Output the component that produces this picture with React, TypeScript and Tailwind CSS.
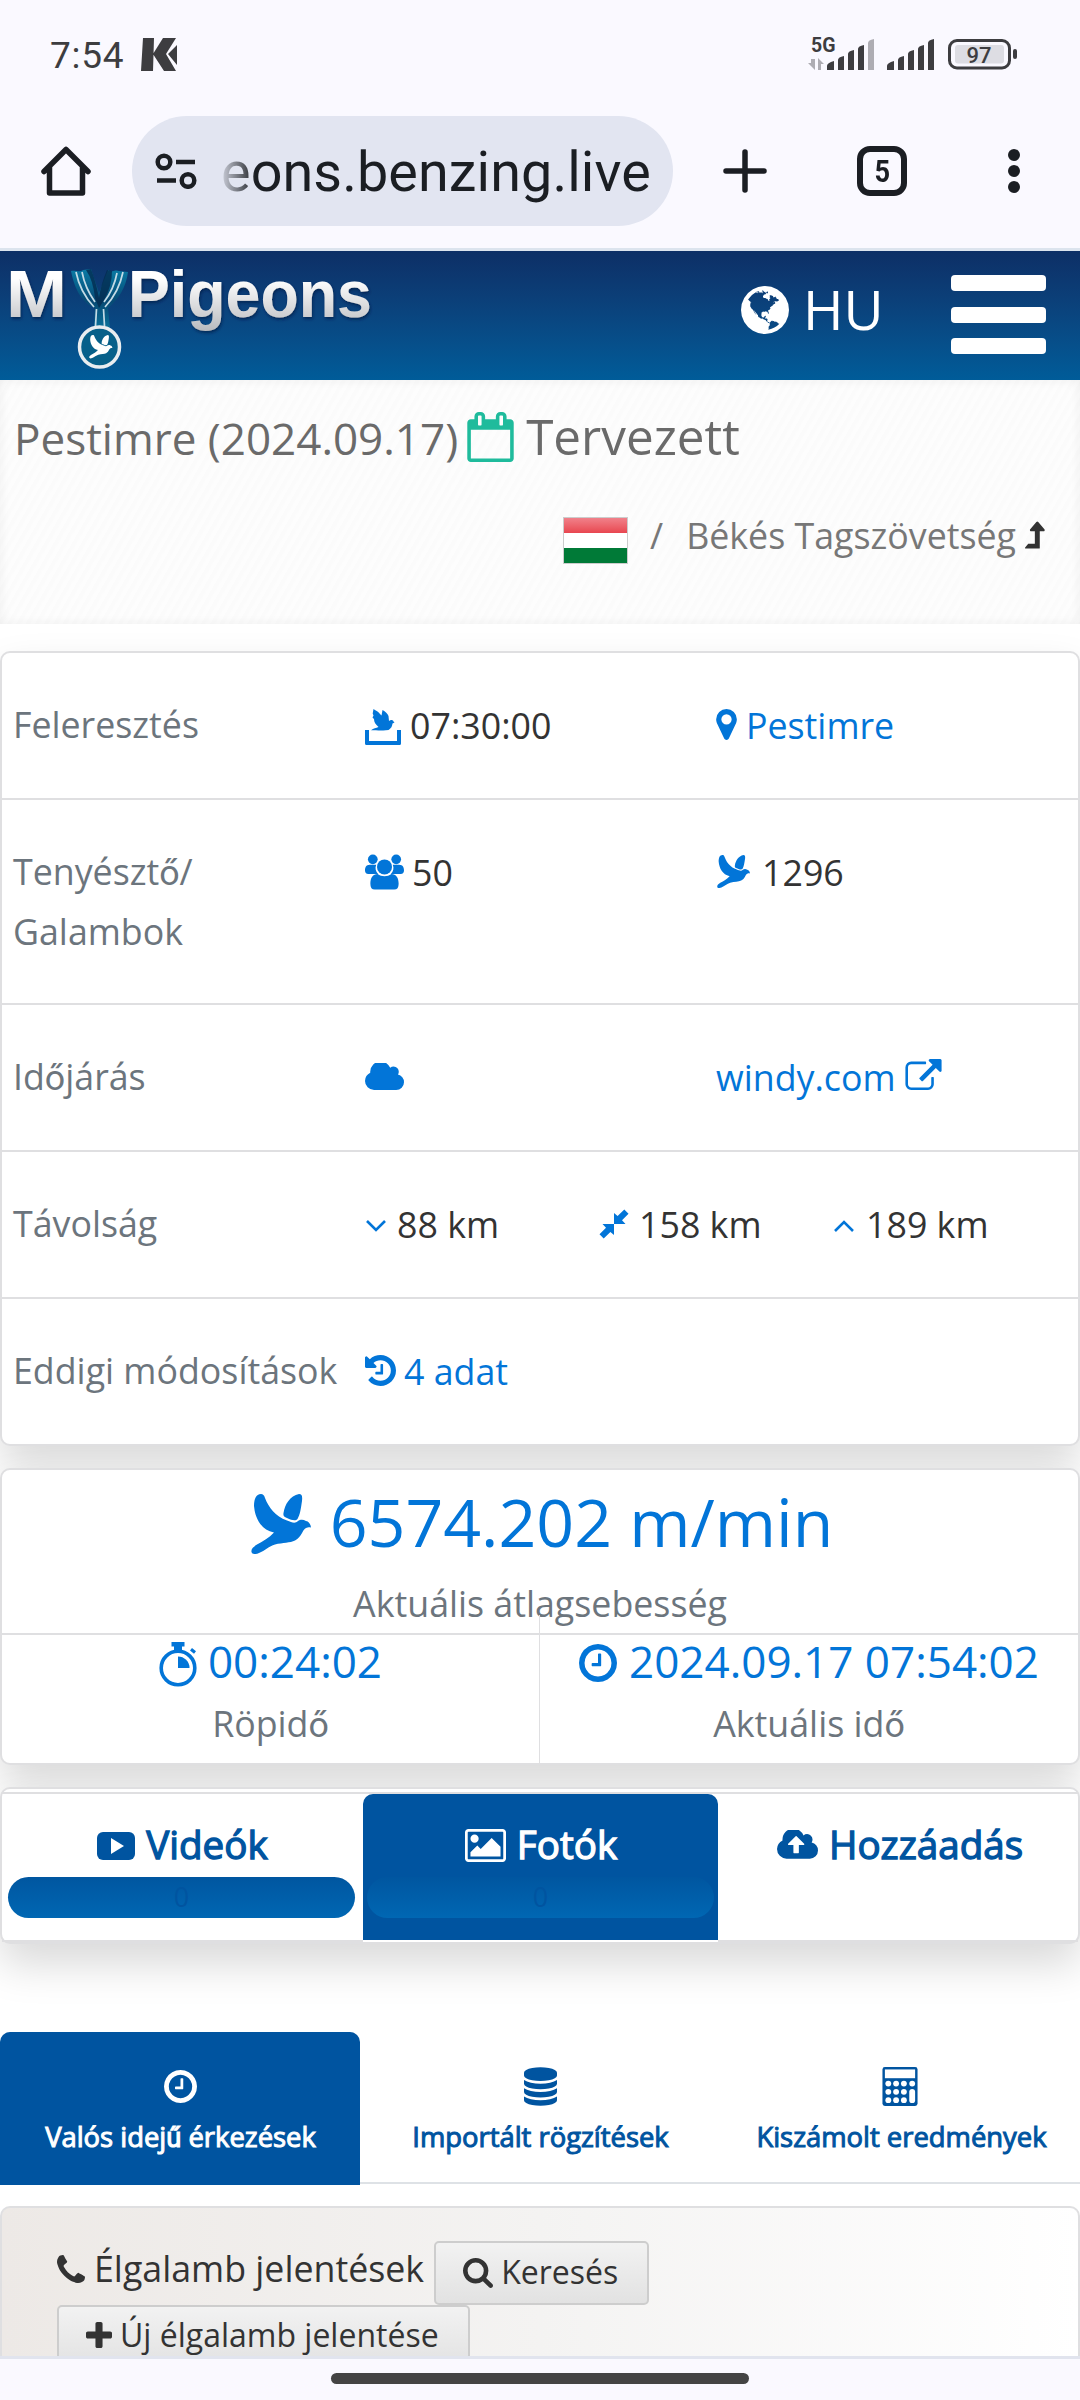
import React from 'react';

interface IconProps {
    className?: string;
}

interface GlyphProps extends IconProps {
    d: string;
    box?: string;
}

const Glyph: React.FC<GlyphProps> = ({ d, box = '0 0 1792 1792', className = '' }) => (
    <svg viewBox={box} fill="currentColor" className={`shrink-0 ${className}`}>
        <path d={d} />
    </svg>
);

const GLOBE =
    'M896 128q209 0 385.5 103t279.5 279.5 103 385.5-103 385.5-279.5 279.5-385.5 103-385.5-103-279.5-279.5-103-385.5 103-385.5 279.5-279.5 385.5-103zm274 521q-2 1-9.5 9.5t-13.5 9.5q2 0 4.5-5t5-11 3.5-7q6-7 22-15 14-6 52-12 34-8 51 11-2-2 9.5-13t14.5-12q3-2 15-4.5t15-7.5l2-22q-12 1-17.5-7t-6.5-21q0 2-6 8 0-7-4.5-8t-11.5 1-9 1q-10-3-15-7.5t-8-16.5-4-15q-2-5-9.5-11t-9.5-10q-1-2-2.5-5.5t-3-6.5-4-5.5-5.5-2.5-7 5-7.5 10-4.5 5q-3-2-6-1.5t-4.5 1-4.5 3-5 3.5q-3 2-8.5 3t-8.5 2q15-5-1-11-10-4-16-3 9-4 7.5-12t-8.5-14h5q-1-4-8.5-8.5t-17.5-8.5-13-6q-8-5-34-9.5t-33-.5q-5 6-4.5 10.5t4 14 3.5 12.5q1 6-5.5 13t-6.5 12q0 7 14 15.5t10 21.5q-3 8-16 16t-16 12q-5 8-1.5 18.5t10.5 16.5q2 2 1.5 4t-3.5 4.5-5.5 4-6.5 3.5l-3 2q-11 5-20.5-6t-13.5-26q-7-25-16-30-23-8-29 1-5-13-41-26-25-9-58-4 6-1 0-15-7-15-19-12 3-6 4-17.5t1-13.5q3-13 12-23 1-1 7-8.5t9.5-13.5.5-6q35 4 50-11 5-5 11.5-17t10.5-17q9-6 14-5.5t14.5 5.5 14.5 5q14 1 15.5-11t-7.5-20q12 1 3-17-4-7-8-9-12-4-27 5-8 4 2 8-1-1-9.5 10.5t-16.5 17.5-16-5q-1-1-5.5-13.5t-9.5-13.5q-8 0-16 15 3-8-11-15t-24-8q19-12-8-27-7-4-20.5-5t-19.5 4q-5 7-5.5 11.5t5 8 10.5 5.5 11.5 4 8.5 3q14 10 8 14-2 1-8.5 3.5t-11.5 4.5-6 4q-3 4 0 14t-2 14q-5-5-9-17.5t-7-16.5q7 9-25 6l-10-1q-4 0-16 2t-20.5 1-13.5-8q-4-8 0-20 1-4 4-2-4-3-11-9.5t-10-8.5q-46 15-94 41 6 1 12-1 5-2 13-6.5t10-5.5q34-14 42-7l5-5q14 16 20 25-7-4-30-1-20 6-22 12 7 12 5 18-4-3-11.5-10t-14.5-11-15-5q-16 0-22 1-146 80-235 222 7 7 12 8 4 1 5 9t2.5 11 11.5-3q9 8 3 19 1-1 44 27 19 17 21 21 3 11-10 18-1-2-9-9t-9-4q-3 5 .5 18.5t10.5 12.5q-7 0-9.5 16t-2.5 35.5-1 23.5l2 1q-3 12 5.5 34.5t21.5 19.5q-13 3 20 43 6 8 8 9 3 2 12 7.5t15 10 10 10.5q4 5 10 22.5t14 23.5q-2 6 9.5 20t10.5 23q-1 0-2.5 1t-2.5 1q3 7 15.5 14t15.5 13q1 3 2 10t3 11 8 2q2-20-24-62-15-25-17-29-3-5-5.5-15.5t-4.5-14.5q2 0 6 1.5t8.500 3.500 7.500 4 2 3q-3 7 2 17.500t12 18.500 17 19 12 13q6 6 14 19.500t0 13.500q9 0 20 10.500t17 19.500q5 8 8 26t5 24q2 7 8.500 13.500t12.500 9.500l16 8 13 7q5 2 18.500 10.500t21.500 11.500q10 4 16 4t14.500-2.500 13.500-3.500q15-2 29 15t21 21q36 19 55 11-2 1 .5 7.500t8 15.500 9 14.500 5.500 8.500q5 6 18 15t18 15q6-4 7-9-3 8 7 20t18 10q14-3 14-32-31 15-49-18 0-1-2.500-5.500t-4-8.500-2.500-8.500 0-7.500 5-3q9 0 10-3.500t-2-12.500-4-13q-1-8-11-20t-12-15q-5 9-16 8t-16-9q0 1-1.500 5.500t-1.500 6.500q-13 0-15-1 1-3 2.500-17.500t3.500-22.500q1-4 5.500-12t7.500-14.500 4-12.500-4.500-9.500-17.500-2.500q-19 1-26 20-1 3-3 10.500t-5 11.500-9 7q-7 3-24 2t-24-5q-13-8-22.500-29t-9.500-37q0-10 2.500-26.500t3-25-5.500-24.500q3-2 9-9.500t10-10.500q2-1 4.500-1.500t4.500 0 4-1.500 3-6q-1-1-4-3-3-3-4-3 7 3 28.500-1.500t27.500 1.500q15 11 22-2 0-1-2.500-9.500t-.5-13.500q5 27 29 9 3 3 15.500 5t17.500 5q3 2 7 5.500t5.500 4.500 5-.5 8.500-6.500q10 14 12 24 11 40 19 44 7 3 11 2t4.500-9.500 0-14-1.500-12.500l-1-8v-18l-1-8q-15-3-18.500-12t1.500-18.500 15-18.500q1-1 8-3.500t15.500-6.500 12.500-8q21-19 15-35 7 0 11-9-1 0-5-3t-7.500-5-4.500-2q9-5 2-16 5-3 7.500-11t7.500-10q9 12 21 2 8-8 1-16 5-7 20.500-10.500t18.500-9.500q7 2 8-2t1-12 3-12q4-5 15-9t13-5l17-11q3-4 0-4 18 2 31-11 10-11-6-20 3-6-3-9.500t-15-5.500q3-1 11.500-.5t10.500-1.500q15-10-7-16-17-5-43 12zm-163 877q206-36 351-189-3-3-12.500-4.500t-12.500-3.500q-18-7-24-8 1-7-2.500-13t-8-9-12.500-8-11-7q-2-2-7-6t-7-5.500-7.500-4.500-8.500-2-10 1l-3 1q-3 1-5.500 2.500t-5.500 3-4 3 0 2.500q-21-17-36-22-5-1-11-5.500t-10.500-7-10-1.500-11.500 7q-5 5-6 15t-2 13q-7-5 0-17.500t2-18.500q-3-6-10.500-4.500t-12 4.500-11.500 8.500-9 6.500-8.500 5.500-8.500 7.500q-3 4-6 12t-5 11q-2-4-11.500-6.500t-9.500-5.500q2 10 4 35t5 38q7 31-12 48-27 25-29 40-4 22 12 26 0 7-8 20.500t-7 21.500q0 6 2 16z';
const CLOCK =
    'M1024 544v448q0 14-9 23t-23 9h-320q-14 0-23-9t-9-23v-64q0-14 9-23t23-9h224v-352q0-14 9-23t23-9h64q14 0 23 9t9 23zm416 352q0-148-73-273t-198-198-273-73-273 73-198 198-73 273 73 273 198 198 273 73 273-73 198-198 73-273zm224 0q0 209-103 385.5t-279.5 279.5-385.5 103-385.5-103-279.5-279.5-103-385.5 103-385.5 279.5-279.5 385.5-103 385.5 103 279.5 279.5 103 385.5z';
const CALENDAR =
    'M192 1664h1408v-1024h-1408v1024zm384-1216v-288q0-14-9-23t-23-9h-64q-14 0-23 9t-9 23v288q0 14 9 23t23 9h64q14 0 23-9t9-23zm768 0v-288q0-14-9-23t-23-9h-64q-14 0-23 9t-9 23v288q0 14 9 23t23 9h64q14 0 23-9t9-23zm384-64v1280q0 52-38 90t-90 38h-1408q-52 0-90-38t-38-90v-1280q0-52 38-90t90-38h128v-96q0-66 47-113t113-47h64q66 0 113 47t47 113v96h384v-96q0-66 47-113t113-47h64q66 0 113 47t47 113v96h128q52 0 90 38t38 90z';
const LEVEL_UP =
    'M1402 515q-18 37-58 37h-192v864q0 14-9 23t-23 9h-704q-21 0-29-18-8-20 4-35l160-192q9-11 25-11h320v-640h-192q-40 0-58-37-17-37 9-68l320-384q18-22 49-22t49 22l320 384q27 32 9 68z';
const MARKER =
    'M1152 640q0-106-75-181t-181-75-181 75-75 181 75 181 181 75 181-75 75-181zm256 0q0 109-33 179l-364 774q-16 33-47.5 52t-67.5 19-67.5-19-46.5-52l-365-774q-33-70-33-179 0-212 150-362t362-150 362 150 150 362z';
const CLOUD =
    'M1920 1152q0 159-112.5 271.5t-271.5 112.5h-1088q-185 0-316.5-131.5t-131.5-316.5q0-130 70-240t188-165q-2-30-2-43 0-212 150-362t362-150q156 0 285.5 87t188.5 231q71-62 166-62 106 0 181 75t75 181q0 76-41 138 130 31 213.5 135.5t83.5 238.5z';
const CLOUD_UPLOAD =
    'M1280 864q0-14-9-23l-352-352q-9-9-23-9t-23 9l-351 351q-10 12-10 24 0 14 9 23t23 9h224v352q0 13 9.5 22.5t22.5 9.5h192q13 0 22.5-9.5t9.5-22.5v-352h224q13 0 22.5-9.5t9.5-22.5zm640 288q0 159-112.5 271.5t-271.5 112.5h-1088q-185 0-316.5-131.5t-131.5-316.5q0-130 70-240t188-165q-2-30-2-43 0-212 150-362t362-150q156 0 285.5 87t188.5 231q71-62 166-62 106 0 181 75t75 181q0 76-41 138 130 31 213.5 135.5t83.5 238.5z';
const EXTERNAL =
    'M1408 928v320q0 119-84.5 203.5t-203.5 84.5h-832q-119 0-203.5-84.5t-84.5-203.5v-832q0-119 84.5-203.5t203.5-84.5h704q14 0 23 9t9 23v64q0 14-9 23t-23 9h-704q-66 0-113 47t-47 113v832q0 66 47 113t113 47h832q66 0 113-47t47-113v-320q0-14 9-23t23-9h64q14 0 23 9t9 23zm384-864v512q0 26-19 45t-45 19-45-19l-176-176-652 652q-10 10-23 10t-23-10l-114-114q-10-10-10-23t10-23l652-652-176-176q-19-19-19-45t19-45 45-19h512q26 0 45 19t19 45z';
const HISTORY =
    'M1664 896q0 156-61 298t-164 245-245 164-298 61q-172 0-327-72.5t-264-204.5q-7-10-6.5-22.5t8.5-20.5l137-138q10-9 25-9 16 2 23 12 73 95 179 147t225 52q104 0 198.5-40.5t163.5-109.5 109.5-163.5 40.5-198.5-40.5-198.5-109.5-163.5-163.5-109.5-198.5-40.5q-98 0-188 35.5t-160 101.5l137 138q31 30 14 69-17 40-59 40h-448q-26 0-45-19t-19-45v-448q0-42 40-59 39-17 69 14l130 129q107-101 244.5-156.5t284.5-55.5q156 0 298 61t245 164 164 245 61 298zm-640-288v448q0 14-9 23t-23 9h-320q-14 0-23-9t-9-23v-64q0-14 9-23t23-9h224v-352q0-14 9-23t23-9h64q14 0 23 9t9 23z';
const PICTURE =
    'M576 576q0 80-56 136t-136 56-136-56-56-136 56-136 136-56 136 56 56 136zm1024 384v448h-1408v-192l320-320 160 160 512-512zm96-704h-1600q-13 0-22.5 9.5t-9.5 22.5v1216q0 13 9.5 22.5t22.5 9.5h1600q13 0 22.5-9.5t9.5-22.5v-1216q0-13-9.5-22.5t-22.5-9.5zm160 32v1216q0 66-47 113t-113 47h-1600q-66 0-113-47t-47-113v-1216q0-66 47-113t113-47h1600q66 0 113 47t47 113z';
const DATABASE =
    'M896 768q237 0 443-43t325-127v170q0 69-103 128t-280 93.5-385 34.5-385-34.5-280-93.5-103-128v-170q119 84 325 127t443 43zm0 768q237 0 443-43t325-127v170q0 69-103 128t-280 93.5-385 34.5-385-34.5-280-93.5-103-128v-170q119 84 325 127t443 43zm0-384q237 0 443-43t325-127v170q0 69-103 128t-280 93.5-385 34.5-385-34.5-280-93.5-103-128v-170q119 84 325 127t443 43zm0-1152q208 0 385 34.5t280 93.5 103 128v128q0 69-103 128t-280 93.5-385 34.5-385-34.5-280-93.5-103-128v-128q0-69 103-128t280-93.5 385-34.5z';
const PHONE =
    'M1600 1240q0 27-10 70.5t-21 68.5q-21 50-122 106-94 51-186 51-27 0-53-3.5t-57.5-12.5-47-14.5-55.5-20.5-49-18q-98-35-175-83-127-79-264-216t-216-264q-48-77-83-175-3-9-18-49t-20.5-55.5-14.5-47-12.5-57.5-3.5-53q0-92 51-186 56-101 106-122 25-11 68.5-21t70.5-10q14 0 21 3 18 6 53 76 11 19 30 54t35 63.5 31 53.5q3 4 17.5 25t21.5 35.5 7 28.5q0 20-28.5 50t-62 55-62 53-28.5 46q0 9 5 22.5t8.5 20.5 14 24 11.5 19q76 137 174 235t235 174q2 1 19 11.5t24 14 20.5 8.5 22.5 5q18 0 46-28.5t53-62 55-62 50-28.5q14 0 28.5 7t35.5 21.5 25 17.5q25 15 53.5 31t63.5 35 54 30q70 35 76 53 3 7 3 21z';
const SEARCH =
    'M1216 832q0-185-131.5-316.5t-316.5-131.5-316.5 131.5-131.5 316.5 131.5 316.5 316.5 131.5 316.5-131.5 131.5-316.5zm512 832q0 52-38 90t-90 38q-54 0-90-38l-343-342q-179 124-399 124-143 0-273.5-55.5t-225-150-150-225-55.5-273.5 55.5-273.5 150-225 225-150 273.5-55.5 273.5 55.5 225 150 150 225 55.5 273.5q0 220-124 399l343 343q37 37 37 90z';
const PLUS =
    'M1600 736v192q0 40-28 68t-68 28h-416v416q0 40-28 68t-68 28h-192q-40 0-68-28t-28-68v-416h-416q-40 0-68-28t-28-68v-192q0-40 28-68t68-28h416v-416q0-40 28-68t68-28h192q40 0 68 28t28 68v416h416q40 0 68 28t28 68z';
const PIGEON =
    'M10 0C5 0 3 5 3 12C4 24 10 36 23 38.500C18 44 12 47 6 50.500C2 53 0 55 .5 58C1 60.500 5 60.500 8 59C14 57 18 52 24 50.500C32 48.500 39 49 44 46.500C51 43 51 36 55 34C57 33 58 33 60 33.500C59.500 30 58 27.500 55 27C52 25 49 25.500 47 27C44 30 41 28.500 36 26.500C24 22 18 14 14 4C13 1 12 0 10 0ZM48 0C39 2 34 10 32.500 19C32 22 33 23 36 24C41 26.500 45 27 46.500 25C49 21 50 14 51 7C51.500 2 51 0 48 0Z';

const Pigeon: React.FC<IconProps> = ({ className }) => <Glyph d={PIGEON} box="0 0 60 60" className={className} />;

const Users: React.FC<IconProps> = ({ className = '' }) => (
    <svg viewBox="0 0 40 36" fill="currentColor" className={`shrink-0 ${className}`}>
        <circle cx="8" cy="5" r="5" />
        <circle cx="32" cy="5" r="5" />
        <path d="M5 10.500h6.500c-1.500 3.500-.5 7 2 9.500H3.500C1 20 0 18.500 0 16.500c0-3 1-6 5-6zM35 10.500h-6.500c1.500 3.500.5 7-2 9.500h10c2.500 0 3.500-1.500 3.500-3.500 0-3-1-6-5-6z" />
        <circle cx="20" cy="12.800" r="7.700" />
        <path d="M13 20c2 1.700 4.500 2.300 7 2.300s5-.6 7-2.300c5 0 7.500 4 7.500 10 0 4-1.500 6-4.500 6H10c-3 0-4.500-2-4.500-6 0-6 2.500-10 7.500-10z" />
    </svg>
);

const Release: React.FC<IconProps> = ({ className = '' }) => (
    <svg viewBox="0 0 36 36" fill="currentColor" className={`shrink-0 ${className}`}>
        <path d="M8.500 0c2.500 1.500 5 3 6.500 5l1.500 1.500L17.500 1c3 1.500 5 3.500 6 6l.5 5c1.500-1.500 4-1.500 4.500.5l1 1-2 1c-.5 3-1 4.500-4 6.500-5 1-10 0-17.500.2 2.500-1.700 5-2.200 7.500-3.200C10.500 15.500 9 13 9 10L7.500 8.500l1-2-.8-2z" />
        <path d="M0 21h4v11h28V21h4v13.500q0 1.500-1.500 1.500h-33Q0 36 0 34.500z" />
    </svg>
);

const Compress: React.FC<IconProps> = ({ className = '' }) => (
    <svg viewBox="0 0 30 30" fill="currentColor" className={`shrink-0 ${className}`}>
        <path d="M15 4v11h11.500l-3.500-3.800 6.500-6.500L25.300.5l-6.700 6.600z" />
        <path d="M15 26V15H3.500l3.500 3.800-6.500 6.500 4.200 4.200 6.700-6.600z" />
    </svg>
);

const Stopwatch: React.FC<IconProps> = ({ className = '' }) => (
    <svg viewBox="0 0 38 45" fill="none" className={`shrink-0 ${className}`}>
        <circle cx="19" cy="26" r="16.800" stroke="currentColor" strokeWidth="3.600" />
        <path d="M12.500 0h13v4.500H23v4h-8v-4h-2.500zM31 8.500l2-2.500 4 3.300-2 2.500z" fill="currentColor" />
        <path d="M19 14.500a11.500 11.500 0 0 1 11.500 11.500H19z" fill="currentColor" />
    </svg>
);

const Calculator: React.FC<IconProps> = ({ className = '' }) => (
    <svg viewBox="0 0 36 40" className={`shrink-0 ${className}`}>
        <rect width="36" height="40" rx="2.500" fill="currentColor" />
        <g fill="#fff">
            <rect x="2.500" y="2.500" width="31" height="9" />
            {[17, 25.5, 34].map((y) =>
                [6, 14, 22].map((x) => <circle key={`${x}-${y}`} cx={x} cy={y} r="3" />)
            )}
            <circle cx="30.500" cy="17" r="3" />
            <rect x="27.500" y="22.500" width="6" height="14.500" rx="3" />
        </g>
    </svg>
);

const Chevron: React.FC<{ up?: boolean }> = ({ up }) => (
    <svg viewBox="0 0 20 12" fill="none" stroke="currentColor" strokeWidth="2.600" className="ml-px h-[12px] w-[20px]">
        <path d={up ? 'M1 11l9-9 9 9' : 'M1 1l9 9 9-9'} />
    </svg>
);

// ő and ű are missing from the web font subset
const Alt: React.FC<{ children: React.ReactNode }> = ({ children }) => <span className="font-[Roboto]">{children}</span>;

const StatusBar: React.FC = () => (
    <div className="flex h-[110px] items-center pl-[50px] pr-[60px] text-[#3d3d40]">
        <span className="font-[Roboto] text-[37px] leading-none tracking-[0.7px]">7:54</span>
        <svg viewBox="0 0 36 33" fill="currentColor" className="mb-[2px] ml-[17px] h-[33px] w-[36px]">
            <path d="M2 0h11l-1 33H0zM22 0h13L25 16l10 17H23L12 16zM36 7v20l-9-11z" />
        </svg>
        <svg viewBox="0 -10 212 58" className="ml-auto h-[58px] w-[212px]" fill="currentColor">
            <text x="3" y="16" fontFamily="Roboto" fontSize="19.500" fontWeight="700">5G</text>
            <path d="M3 23h4v11L0 27h3zM10 34V22l6 6h-3v6z" opacity=".4" />
            <path d="M19 34v-4q0-3 7-5v9zM30 34V24q0-3 6-4v14zM40 34V18q0-3 6-4v20zM50 34V13q0-3 6-4v25z" />
            <path d="M60 34V7q0-3 6-4v31z" opacity=".4" />
            <path d="M79 34v-4q0-3 7-5v9zM90 34V24q0-3 6-4v14zM100 34V18q0-3 6-4v20zM110 34V13q0-3 6-4v25zM120 34V7q0-3 6-4v31z" />
            <rect x="141.500" y="4.500" width="60" height="27.500" rx="7.500" fill="none" stroke="currentColor" strokeWidth="3" />
            <rect x="147" y="9" width="49" height="18.500" rx="3" opacity=".15" />
            <rect x="205" y="13" width="4" height="10" rx="2" />
            <text x="158.500" y="26.500" fontFamily="Roboto" fontSize="22" fontWeight="500">97</text>
        </svg>
    </div>
);

const AddressBar: React.FC = () => (
    <div className="flex items-start pt-[6px] text-[#1b1e23]">
        <svg viewBox="0 0 50 50" fill="none" stroke="currentColor" strokeWidth="5.500" strokeLinejoin="round" strokeLinecap="round" className="ml-[41px] mt-[30px] h-[50px] w-[50px]">
            <path d="M3 25.500L25 3.500l22 22M8.500 21v26h33V21" />
        </svg>
        <div className="ml-[41px] flex h-[110px] w-[541px] items-center overflow-hidden rounded-full bg-[#e2e5f1] pl-[23px]">
            <svg viewBox="0 0 42 36" fill="none" stroke="currentColor" strokeWidth="4.500" className="h-[36px] w-[42px] shrink-0">
                <circle cx="9" cy="9" r="6.300" />
                <circle cx="33" cy="27.500" r="6.300" />
                <path d="M21 9h19M2 27.500h19" />
            </svg>
            <span className="ml-[24px] mt-[2px] bg-linear-to-r from-[#1b1e23]/10 via-[#1b1e23] via-8% to-[#1b1e23] bg-clip-text font-[Roboto] text-[55.7px] leading-[80px] tracking-[0.1px] text-transparent">eons.benzing.live</span>
        </div>
        <svg viewBox="0 0 44 44" stroke="currentColor" strokeWidth="5.500" strokeLinecap="round" className="ml-[50px] mt-[33px] h-[44px] w-[44px]">
            <path d="M22 3v38M3 22h38" />
        </svg>
        <div className="ml-[90px] mt-[30px] flex h-[50px] w-[50px] items-center justify-center rounded-[13px] border-[6px] border-[#1b1e23] font-[Roboto] text-[32px] font-bold leading-none">
            <span className="scale-x-85">5</span>
        </div>
        <div className="ml-[101px] mt-[33px] flex h-[44px] w-[12px] flex-col justify-between">
            <span className="size-[12px] rounded-full bg-[#1b1e23]" />
            <span className="size-[12px] rounded-full bg-[#1b1e23]" />
            <span className="size-[12px] rounded-full bg-[#1b1e23]" />
        </div>
    </div>
);

const Logo: React.FC = () => (
    <svg viewBox="0 0 374 120" className="h-[120px] w-[374px]">
        <defs>
            <linearGradient id="letters" x1="0" y1="0" x2="0" y2="1">
                <stop offset=".3" stopColor="#fff" />
                <stop offset="1" stopColor="#b9bbbf" />
            </linearGradient>
            <linearGradient id="ribbon" x1="0" y1="0" x2="0" y2="1">
                <stop offset="0" stopColor="#0a7ba5" />
                <stop offset=".55" stopColor="#064a74" />
                <stop offset="1" stopColor="#0a7099" />
            </linearGradient>
            <filter id="drop" x="-10%" y="-10%" width="120%" height="130%">
                <feDropShadow dx="1" dy="2" stdDeviation="1.500" floodColor="#031f45" floodOpacity=".7" />
            </filter>
        </defs>
        <g filter="url(#drop)" fill="url(#letters)" fontFamily="Liberation Sans" fontWeight="700">
            <text x="6" y="64.500" fontSize="66" textLength="61" lengthAdjust="spacingAndGlyphs">M</text>
            <text x="128" y="64.500" fontSize="66" textLength="244" lengthAdjust="spacingAndGlyphs">Pigeons</text>
        </g>
        <path d="M71 19c5-1 8 2 12-1l8-1 8 24 9-23c4 3 7-1 11 1l9 1c-2 16-10 28-20 36l2 20H94l1-20C80 50 74 34 71 19z" fill="url(#ribbon)" />
        <path d="M86 18q7 10 9 28l4 10 5-8q8-14 8-29l-5-1q-6 14-8 28-3-16-8-29z" fill="#042c50" opacity=".8" />
        <path d="M76 20q4 20 18 35M82 20q3 16 13 30M123 20q-4 20-18 35M117 21q-3 16-13 29M96.500 57l-1 17M103.500 57l1 17" fill="none" stroke="#c3dbe6" strokeWidth="1.700" />
        <circle cx="99.500" cy="95" r="20" fill="#07608a" stroke="#e9edf0" strokeWidth="3.500" />
        <g transform="translate(89 83) scale(.39)" fill="#fff">
            <path d={PIGEON} />
        </g>
    </svg>
);

const SiteHeader: React.FC = () => (
    <header className="flex h-[129px] bg-linear-to-b from-[#0d2f66] to-[#005c99] text-white">
        <div className="pt-[1px]">
            <Logo />
        </div>
        <Glyph d={GLOBE} box="128 128 1536 1536" className="ml-[367px] mt-[35px] size-[48px]" />
        <span className="ml-[14px] mt-[20px] text-[55px] leading-[76px]">HU</span>
        <div className="ml-auto mr-[34px] mt-[24px] flex h-[79px] w-[95px] flex-col justify-between">
            <span className="h-[16px] rounded-[4px] bg-white" />
            <span className="h-[16px] rounded-[4px] bg-white" />
            <span className="h-[16px] rounded-[4px] bg-white" />
        </div>
    </header>
);

const PageTitle: React.FC = () => (
    <section className="h-[244px] bg-[repeating-linear-gradient(120deg,#fbfbfb_0,#fbfbfb_3px,#fdfdfd_5px,#fdfdfd_8px)] shadow-[inset_0_0_12px_rgba(0,0,0,0.06)]">
        <div className="flex h-[131px] items-baseline pl-[14px] pt-[26px] leading-[60px] text-[#6a6a6a]">
            <span className="text-[44px]">Pestimre (2024.09.17)</span>
            <Glyph d={CALENDAR} box="64 0 1664 1792" className="ml-[9px] mt-[6px] h-[50px] w-[47px] self-start text-[#1fbb9c]" />
            <span className="ml-[12px] text-[49.4px]">Tervezett</span>
        </div>
        <div className="flex items-start justify-end pr-[35px] text-[35.75px] leading-[48px] text-[#777]">
            <div className="mt-[6px] flex h-[47px] w-[65px] flex-col border border-[#ccc]">
                <span className="flex-1 bg-linear-to-b from-[#f0808a] to-[#e84550]" />
                <span className="flex-1 bg-white" />
                <span className="flex-1 bg-[#007a37]" />
            </div>
            <span className="ml-[22px]">/</span>
            <span className="ml-[23px]">Békés Tagszövetség</span>
            <Glyph d={LEVEL_UP} box="384 32 1040 1420" className="ml-[9px] mt-[10px] h-[28px] w-[20px] text-[#333]" />
        </div>
    </section>
);

const Row: React.FC<{ label: React.ReactNode; tall?: boolean; children: React.ReactNode }> = ({ label, tall, children }) => (
    <div className={`flex border-b-2 border-[#dfdfe1] px-[11px] pt-[42px] last:border-b-0 ${tall ? 'h-[205px]' : 'h-[147px]'}`}>
        <div className="w-[352px] shrink-0 leading-[58px] text-[#6c757d]">{label}</div>
        {children}
    </div>
);

const Cell: React.FC<{ wide?: boolean; children: React.ReactNode }> = ({ wide, children }) => (
    <div className={`flex h-[59px] items-center leading-[58px] ${wide ? 'w-[352px]' : 'w-[235px]'}`}>{children}</div>
);

const CARD = 'rounded-[10px] border-2 border-[#dfdfe1] bg-white shadow-[0_21px_42px_rgba(0,0,0,0.15)]';

const Details: React.FC = () => (
    <section className={`mt-[27px] h-[795px] text-[35.75px] text-[#333] ${CARD}`}>
        <Row label="Feleresztés">
            <Cell wide>
                <Release className="mt-[4px] h-[36px] w-[36px] text-[#0275d8]" />
                <span className="ml-[9px]">07:30:00</span>
            </Cell>
            <Cell wide>
                <Glyph d={MARKER} box="384 128 1024 1536" className="h-[31px] w-[21px] text-[#0275d8]" />
                <span className="ml-[9px] text-[#0275d8]">Pestimre</span>
            </Cell>
        </Row>
        <Row tall label={<>Tenyészt<Alt>ő</Alt>/<br />Galambok</>}>
            <Cell wide>
                <Users className="h-[36px] w-[39px] text-[#0275d8]" />
                <span className="ml-[8px]">50</span>
            </Cell>
            <Cell wide>
                <Pigeon className="ml-px h-[33px] w-[33px] text-[#0275d8]" />
                <span className="ml-[12px]">1296</span>
            </Cell>
        </Row>
        <Row label={<>Id<Alt>ő</Alt>járás</>}>
            <Cell wide>
                <Glyph d={CLOUD} box="0 256 1920 1280" className="h-[28px] w-[39px] text-[#0275d8]" />
            </Cell>
            <Cell wide>
                <span className="text-[#0275d8]">windy.com</span>
                <Glyph d={EXTERNAL} box="0 0 1792 1536" className="mb-[4px] ml-[9px] h-[31px] w-[37px] text-[#0275d8]" />
            </Cell>
        </Row>
        <Row label="Távolság">
            <Cell>
                <span className="mt-[4px] leading-none text-[#0275d8]"><Chevron /></span>
                <span className="ml-[11px]">88 km</span>
            </Cell>
            <Cell>
                <Compress className="h-[30px] w-[30px] text-[#0275d8]" />
                <span className="ml-[10px]">158 km</span>
            </Cell>
            <Cell>
                <span className="mt-[4px] leading-none text-[#0275d8]"><Chevron up /></span>
                <span className="ml-[12px]">189 km</span>
            </Cell>
        </Row>
        <Row label="Eddigi módosítások">
            <div className="flex h-[59px] items-center leading-[58px] text-[#0275d8]">
                <Glyph d={HISTORY} box="128 128 1536 1536" className="h-[31px] w-[31px]" />
                <span className="ml-[8px]">4 adat</span>
            </div>
        </Row>
    </section>
);

const Speed: React.FC = () => (
    <section className={`mt-[22px] h-[297px] text-[#0275d8] ${CARD}`}>
        <div className="relative h-[165px] border-b-2 border-[#dfdfe1] text-center">
            <div className="flex h-[108px] items-center justify-center pl-[4px]">
                <Pigeon className="h-[60px] w-[60px]" />
                <span className="-mt-[6px] ml-[19px] text-[66.2px] leading-none">6574.202 m/min</span>
            </div>
            <div className="-mt-[2px] text-[35.75px] leading-[54px] text-[#6c757d]">Aktuális átlagsebesség</div>
            <span className="absolute -bottom-[2px] left-[537px] h-[20px] w-px bg-[#dfdfe1]" />
        </div>
        <div className="flex h-[128px] text-center">
            <div className="w-[538px] border-r border-[#dfdfe1]">
                <div className="flex h-[52px] items-center justify-center text-[44px] leading-[52px]">
                    <Stopwatch className="mt-[7px] h-[45px] w-[38px]" />
                    <span className="ml-[11px]">00:24:02</span>
                </div>
                <div className="pt-[9px] text-[35.75px] leading-[54px] text-[#6c757d]">Röpid<Alt>ő</Alt></div>
            </div>
            <div className="flex-1">
                <div className="flex h-[52px] items-center justify-center text-[44px] leading-[52px]">
                    <Glyph d={CLOCK} box="128 128 1536 1536" className="mt-[3px] size-[38px]" />
                    <span className="ml-[12px]">2024.09.17 07:54:02</span>
                </div>
                <div className="pt-[9px] text-[35.75px] leading-[54px] text-[#6c757d]">Aktuális id<Alt>ő</Alt></div>
            </div>
        </div>
    </section>
);

const BOLD = '[-webkit-text-stroke:1.3px_currentColor]';

const MediaTabs: React.FC = () => (
    <section className={`mt-[22px] h-[157px] pt-[3px] ${CARD}`}>
        <div className="flex h-[150px] border-t-2 border-[#dfdfe1] text-[38.6px] leading-[50px] text-[#0054a0]">
            <div className="w-[361px] border-b-2 border-[#dfdfe1] pl-[6px] pr-[8px] pt-[25px]">
                <div className="flex items-center justify-center pl-[2px]">
                    <svg viewBox="0 0 38 28" className="mt-[3px] h-[28px] w-[38px]">
                        <rect width="38" height="28" rx="6" fill="currentColor" />
                        <path d="M14 6l13 8-13 8z" fill="#fff" />
                    </svg>
                    <span className={`ml-[11px] ${BOLD}`}>Videók</span>
                </div>
                <div className="mt-[8px] h-[41px] rounded-full bg-linear-to-b from-[#0056a0] to-[#0067b3] text-center text-[27px] leading-[39px]">0</div>
            </div>
            <div className="w-[355px] rounded-t-[10px] border-b-2 border-white bg-[#0054a0] bg-clip-padding px-[4px] pt-[25px] text-white">
                <div className="flex items-center justify-center pl-px">
                    <Glyph d={PICTURE} box="-64 128 1920 1536" className="mt-[3px] h-[33px] w-[41px]" />
                    <span className={`ml-[11px] ${BOLD}`}>Fotók</span>
                </div>
                <div className="mt-[8px] h-[41px] rounded-full bg-linear-to-b from-[#0056a0] to-[#0067b3] text-center text-[27px] leading-[39px] text-[#0054a0]">0</div>
            </div>
            <div className="flex flex-1 justify-center border-b-2 border-[#dfdfe1] pl-[4px] pt-[25px]">
                <Glyph d={CLOUD_UPLOAD} box="0 256 1920 1280" className="mt-[11px] h-[30px] w-[41px]" />
                <span className={`ml-[11px] ${BOLD}`}>Hozzáadás</span>
            </div>
        </div>
    </section>
);

const ResultTabs: React.FC = () => (
    <nav className="mt-[88px] flex h-[153px] text-center text-[27.4px] leading-[40px] text-[#0054a0] [-webkit-text-stroke:1px_currentColor]">
        <div className="flex w-[360px] flex-col items-center rounded-t-[10px] bg-[#0054a0] text-white">
            <Glyph d={CLOCK} box="128 128 1536 1536" className="mt-[38px] size-[33px]" />
            <span className="mt-[14px] pl-px">Valós idej<Alt>ű</Alt> érkezések</span>
        </div>
        <div className="mb-px flex w-[360px] flex-col items-center border-b-2 border-[#dee2e6]">
            <Glyph d={DATABASE} box="128 0 1536 1792" className="mt-[35px] h-[39px] w-[33px]" />
            <span className="mt-[11px] pl-px">Importált rögzítések</span>
        </div>
        <div className="mb-px flex w-[360px] flex-col items-center border-b-2 border-[#dee2e6]">
            <Calculator className="mt-[35px] h-[39px] w-[36px]" />
            <span className="mt-[11px] whitespace-nowrap pl-[3px]">Kiszámolt eredmények</span>
        </div>
    </nav>
);

const BUTTON = 'flex items-center rounded-[5px] border-2 border-[#cdcdcd] bg-linear-to-b from-[#f2f2f2] to-[#e2e2e2] text-[32px] leading-[44px] text-[#333]';

const Reports: React.FC = () => (
    <section className="mt-[21px] h-[150px] overflow-hidden rounded-t-[10px] border-2 border-b-0 border-[#dfdfe1] bg-linear-to-r from-[#ede9e6] via-[#f4f3f2] to-white pl-[55px] pt-[33px] text-[#333]">
        <div className="flex h-[64px] items-center">
            <Glyph d={PHONE} box="192 128 1408 1408" className="mb-[8px] size-[28px]" />
            <span className="mb-[9px] ml-[9px] text-[35.75px]">Élgalamb jelentések</span>
            <button className={`ml-[10px] h-[64px] w-[215px] pl-[27px] ${BUTTON}`}>
                <Glyph d={SEARCH} box="64 128 1664 1664" className="size-[30px]" />
                <span className="mb-[3px] ml-[8px]">Keresés</span>
            </button>
        </div>
        <button className={`h-[64px] w-[413px] pl-[27px] ${BUTTON}`}>
            <Glyph d={PLUS} box="192 128 1408 1408" className="mb-[5px] size-[26px]" />
            <span className="mb-[5px] ml-[8px] whitespace-nowrap">Új élgalamb jelentése</span>
        </button>
    </section>
);

export default function App() {
    return (
        <div className="h-[2400px] w-[1080px] overflow-hidden bg-white font-['Open_Sans',sans-serif]">
            <div className="h-[251px] border-b-[3px] border-[#dce4ee] bg-[#faf9ff]">
                <StatusBar />
                <AddressBar />
            </div>
            <SiteHeader />
            <PageTitle />
            <Details />
            <Speed />
            <MediaTabs />
            <ResultTabs />
            <Reports />
            <footer className="flex h-[44px] justify-center border-t-[3px] border-[#e1e4ee] bg-[#faf9ff] pt-[14px]">
                <span className="h-[11px] w-[418px] rounded-full bg-[#444]" />
            </footer>
        </div>
    );
}
